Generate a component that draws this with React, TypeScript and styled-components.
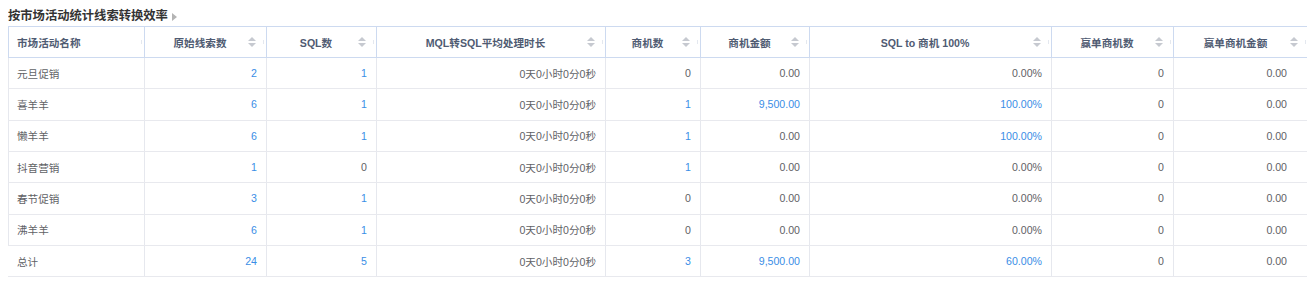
import React from "react";
import styled, { createGlobalStyle } from "styled-components";

const GlobalStyle = createGlobalStyle`
  html, body { margin: 0; padding: 0; background: #fff; }
  body {
    margin: 8px;
    font-family: "Liberation Sans", "Noto Sans CJK SC", sans-serif;
  }
`;

const COLS = "136px 122px 110px 229px 95px 109px 242px 122px 135px";

const Wrapper = styled.div`
  width: 1301px;
`;

const TitleBar = styled.div`
  display: flex;
  align-items: center;
  gap: 4px;
  height: 16px;
  margin-bottom: 2px;
`;

const Title = styled.h3`
  margin: 0;
  font-size: 12.3px;
  font-weight: 700;
  color: #333;
  line-height: 16px;
  font-family: "Liberation Sans", "Noto Sans CJK SC", sans-serif;
`;

const Caret = styled.span`
  width: 0;
  height: 0;
  margin-top: 1px;
  border-top: 4px solid transparent;
  border-bottom: 4px solid transparent;
  border-left: 5px solid #b4b4b4;
`;

const HeadRow = styled.div`
  display: grid;
  grid-template-columns: ${COLS};
  height: 32px;
  box-sizing: border-box;
  border: 1px solid #cddaf0;
  border-left: none;
`;

const HeadCell = styled.div<{ $left?: boolean }>`
  position: relative;
  display: flex;
  align-items: center;
  justify-content: ${(p) => (p.$left ? "flex-start" : "center")};
  padding: ${(p) => (p.$left ? "0 0 0 8px" : "0 21px 0 10px")};
  border-left: 1px solid #cddaf0;
  font-size: 10.6px;
  font-weight: 700;
  color: #4f5b72;
  white-space: nowrap;
  &::after {
    content: "";
    position: absolute;
    right: 2px;
    top: 13px;
    width: 1px;
    height: 4px;
    background: #e4e8ef;
  }
`;

const SortIcon = styled.span`
  position: absolute;
  right: 10px;
  top: 50%;
  transform: translateY(-50%);
  display: flex;
  flex-direction: column;
  gap: 2px;
  &::before,
  &::after {
    content: "";
    width: 0;
    height: 0;
    border-left: 4px solid transparent;
    border-right: 4px solid transparent;
  }
  &::before {
    border-bottom: 4px solid #c6c9d0;
  }
  &::after {
    border-top: 4px solid #c6c9d0;
  }
`;

const BodyRow = styled.div`
  display: grid;
  grid-template-columns: ${COLS};
  height: 31.33px;
  box-sizing: border-box;
  border-bottom: 1px solid #e8e9ee;
`;

const Cell = styled.div<{ $left?: boolean; $link?: boolean; $noEdge?: boolean; $last?: boolean }>`
  display: flex;
  align-items: center;
  justify-content: ${(p) => (p.$left ? "flex-start" : "flex-end")};
  padding: ${(p) => (p.$left ? "0 0 0 8px" : p.$last ? "0 21px 0 0" : "0 9px 0 0")};
  border-left: 1px solid ${(p) => (p.$noEdge ? "transparent" : "#e6e8ee")};
  font-size: 10.6px;
  color: ${(p) => (p.$link ? "#3a8ee6" : "#5f6266")};
  white-space: nowrap;
`;

type V = { t: string; l?: boolean };
const n = (t: string): V => ({ t });
const L = (t: string): V => ({ t, l: true });

const headers = [
  "市场活动名称",
  "原始线索数",
  "SQL数",
  "MQL转SQL平均处理时长",
  "商机数",
  "商机金额",
  "SQL to 商机 100%",
  "赢单商机数",
  "赢单商机金额",
];

const T = "0天0小时0分0秒";

const rows: V[][] = [
  [n("元旦促销"), L("2"), L("1"), n(T), n("0"), n("0.00"), n("0.00%"), n("0"), n("0.00")],
  [n("喜羊羊"), L("6"), L("1"), n(T), L("1"), L("9,500.00"), L("100.00%"), n("0"), n("0.00")],
  [n("懒羊羊"), L("6"), L("1"), n(T), L("1"), n("0.00"), L("100.00%"), n("0"), n("0.00")],
  [n("抖音营销"), L("1"), n("0"), n(T), L("1"), n("0.00"), n("0.00%"), n("0"), n("0.00")],
  [n("春节促销"), L("3"), L("1"), n(T), n("0"), n("0.00"), n("0.00%"), n("0"), n("0.00")],
  [n("沸羊羊"), L("6"), L("1"), n(T), n("0"), n("0.00"), n("0.00%"), n("0"), n("0.00")],
];

const total: V[] = [n("总计"), L("24"), L("5"), n(T), L("3"), L("9,500.00"), L("60.00%"), n("0"), n("0.00")];

export default function App() {
  const last = headers.length - 1;
  return (
    <>
      <GlobalStyle />
      <Wrapper>
        <TitleBar>
          <Title>按市场活动统计线索转换效率</Title>
          <Caret />
        </TitleBar>
        <HeadRow>
          {headers.map((h, i) => (
            <HeadCell key={h} $left={i === 0}>
              {h}
              {i > 0 && <SortIcon />}
            </HeadCell>
          ))}
        </HeadRow>
        {rows.map((r, ri) => (
          <BodyRow key={ri}>
            {r.map((c, ci) => (
              <Cell key={ci} $left={ci === 0} $link={c.l} $last={ci === last}>
                {c.t}
              </Cell>
            ))}
          </BodyRow>
        ))}
        <BodyRow>
          {total.map((c, ci) => (
            <Cell key={ci} $left={ci === 0} $link={c.l} $noEdge={ci === 0} $last={ci === last}>
              {c.t}
            </Cell>
          ))}
        </BodyRow>
      </Wrapper>
    </>
  );
}
